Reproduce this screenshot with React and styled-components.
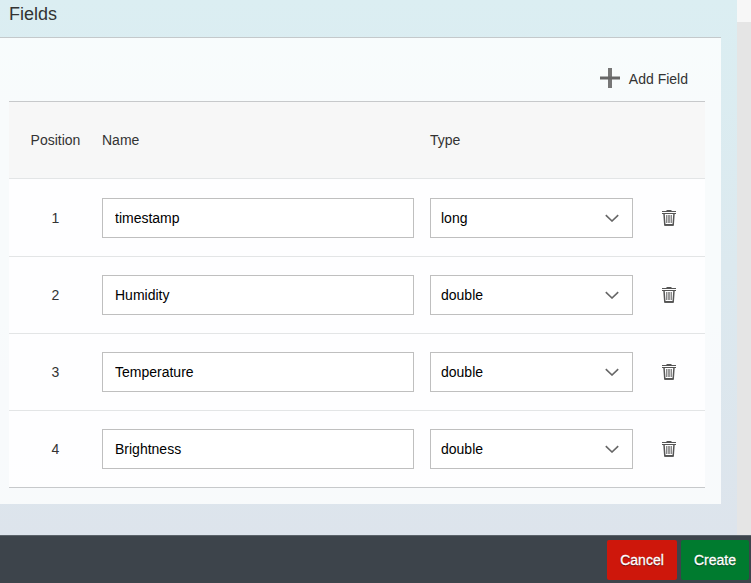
import React from 'react';
import styled, { createGlobalStyle } from 'styled-components';

const GlobalStyle = createGlobalStyle`
  * { box-sizing: border-box; }
  body {
    margin: 0;
    overflow: hidden;
    font-family: "Liberation Sans", Arial, sans-serif;
    font-size: 14px;
    color: #333;
  }
  button, input { font: inherit; }
`;

const Page = styled.div`
  display: flex;
  flex-direction: column;
  width: 751px;
  height: 583px;
`;

const Body = styled.div`
  display: flex;
  height: 535px;
`;

const Content = styled.main`
  width: 737px;
  background: linear-gradient(#dbeef2, #dde4ec);
`;

const Scrollbar = styled.div`
  flex: 1;
  background: #e5e5e5;
`;

const Thumb = styled.div`
  height: 22px;
  background: #f7f7f7;
`;

const Title = styled.h2`
  margin: 0;
  width: 721px;
  height: 38px;
  padding: 4px 0 0 9px;
  border-bottom: 1px solid #c4c9cb;
  font-size: 18px;
  line-height: 20px;
  font-weight: 400;
`;

const Panel = styled.section`
  width: 721px;
  height: 466px;
  padding: 0 16px 0 9px;
  background: rgba(255, 255, 255, 0.8);
`;

const Toolbar = styled.div`
  display: flex;
  justify-content: flex-end;
  height: 63px;
  padding: 30px 17px 0 0;
`;

const AddButton = styled.button`
  display: flex;
  align-items: center;
  gap: 9px;
  height: 20px;
  padding: 0;
  border: 0;
  background: none;
  color: #333;
  line-height: 20px;

  span { padding-top: 2px; }
`;

const Table = styled.div`
  border-top: 1px solid #c7c9cb;
`;

const Row = styled.div`
  display: grid;
  grid-template-columns: 93px 312px 16px 203px 72px;
  align-items: center;
  height: ${(p) => p.$height || 77}px;
  background: ${(p) => (p.$head ? '#f7f7f7' : 'rgba(255, 255, 255, 0.8)')};
  border-bottom: 1px solid ${(p) => (p.$last ? '#c7c9cb' : '#e3e5e6')};
`;

const Cell = styled.div`
  grid-column: ${(p) => p.$column};
  text-align: ${(p) => (p.$center ? 'center' : 'left')};
`;

const NameInput = styled.input`
  display: block;
  width: 312px;
  height: 40px;
  padding: 0 12px;
  border: 1px solid #bfbfbf;
  border-radius: 0;
  background: #fff;
  color: #000;
  outline: none;
`;

const TypeSelect = styled.div`
  display: flex;
  align-items: center;
  justify-content: space-between;
  width: 203px;
  height: 40px;
  padding: 0 13px 0 10px;
  border: 1px solid #bfbfbf;
  background: #fff;
  color: #000;
`;

const DeleteButton = styled.button`
  display: block;
  margin: 0 auto;
  padding: 0;
  border: 0;
  background: none;
  line-height: 0;
`;

const Footer = styled.footer`
  display: flex;
  justify-content: flex-end;
  gap: 4px;
  height: 48px;
  padding: 4px 2px 0 0;
  border-top: 1px solid #5b636a;
  background: #3d444b;
`;

const ActionButton = styled.button`
  width: ${(p) => p.$width}px;
  height: 40px;
  padding: 0;
  border: 0;
  border-radius: 2px;
  background: ${(p) => p.$color};
  color: #fff;
  -webkit-text-stroke: 0.3px #fff;
  text-shadow: 0 1px 1px rgba(0, 0, 0, 0.6);
`;

const PlusIcon = () => (
  <svg width="20" height="20" viewBox="0 0 20 20">
    <path d="M8 0h4v20H8z" fill="#777" />
    <path d="M0 8.5h20v3H0z" fill="#666" />
  </svg>
);

const ChevronIcon = () => (
  <svg width="14" height="8" viewBox="0 0 14 8" fill="none" stroke="#666" strokeWidth="1.6">
    <path d="M.8 1.1L7 7L13.2 1.1" />
  </svg>
);

const TrashIcon = () => (
  <svg width="14" height="16" viewBox="0 0 14 16" fill="none" stroke="#555">
    <path d="M4.5 .5h5" />
    <path d="M0 1.5h14" />
    <path d="M0 3.5h14" />
    <path d="M2 3.5l.8 11.2h8.4l.8-11.2" strokeWidth="1.5" />
    <path d="M2.5 15h9" strokeWidth="1.8" />
    <path d="M4.8 5v8M9.2 5v8" />
    <path d="M7 5v8" stroke="#999" strokeWidth="2" />
  </svg>
);

const fields = [
  { name: 'timestamp', type: 'long' },
  { name: 'Humidity', type: 'double' },
  { name: 'Temperature', type: 'double' },
  { name: 'Brightness', type: 'double' },
];

export default function App() {
  return (
    <Page>
      <GlobalStyle />
      <Body>
        <Content>
          <Title>Fields</Title>
          <Panel>
            <Toolbar>
              <AddButton><PlusIcon /><span>Add Field</span></AddButton>
            </Toolbar>
            <Table>
              <Row $head>
                <Cell $column={1} $center>Position</Cell>
                <Cell $column={2}>Name</Cell>
                <Cell $column={4}>Type</Cell>
              </Row>
              {fields.map((field, i) => (
                <Row key={field.name} $height={i === 0 ? 78 : 77} $last={i === fields.length - 1}>
                  <Cell $column={1} $center>{i + 1}</Cell>
                  <Cell $column={2}><NameInput defaultValue={field.name} /></Cell>
                  <Cell $column={4}>
                    <TypeSelect>{field.type}<ChevronIcon /></TypeSelect>
                  </Cell>
                  <Cell $column={5}>
                    <DeleteButton aria-label="Delete field"><TrashIcon /></DeleteButton>
                  </Cell>
                </Row>
              ))}
            </Table>
          </Panel>
        </Content>
        <Scrollbar><Thumb /></Scrollbar>
      </Body>
      <Footer>
        <ActionButton $width={70} $color="#ce170b">Cancel</ActionButton>
        <ActionButton $width={68} $color="#007b2f">Create</ActionButton>
      </Footer>
    </Page>
  );
}
